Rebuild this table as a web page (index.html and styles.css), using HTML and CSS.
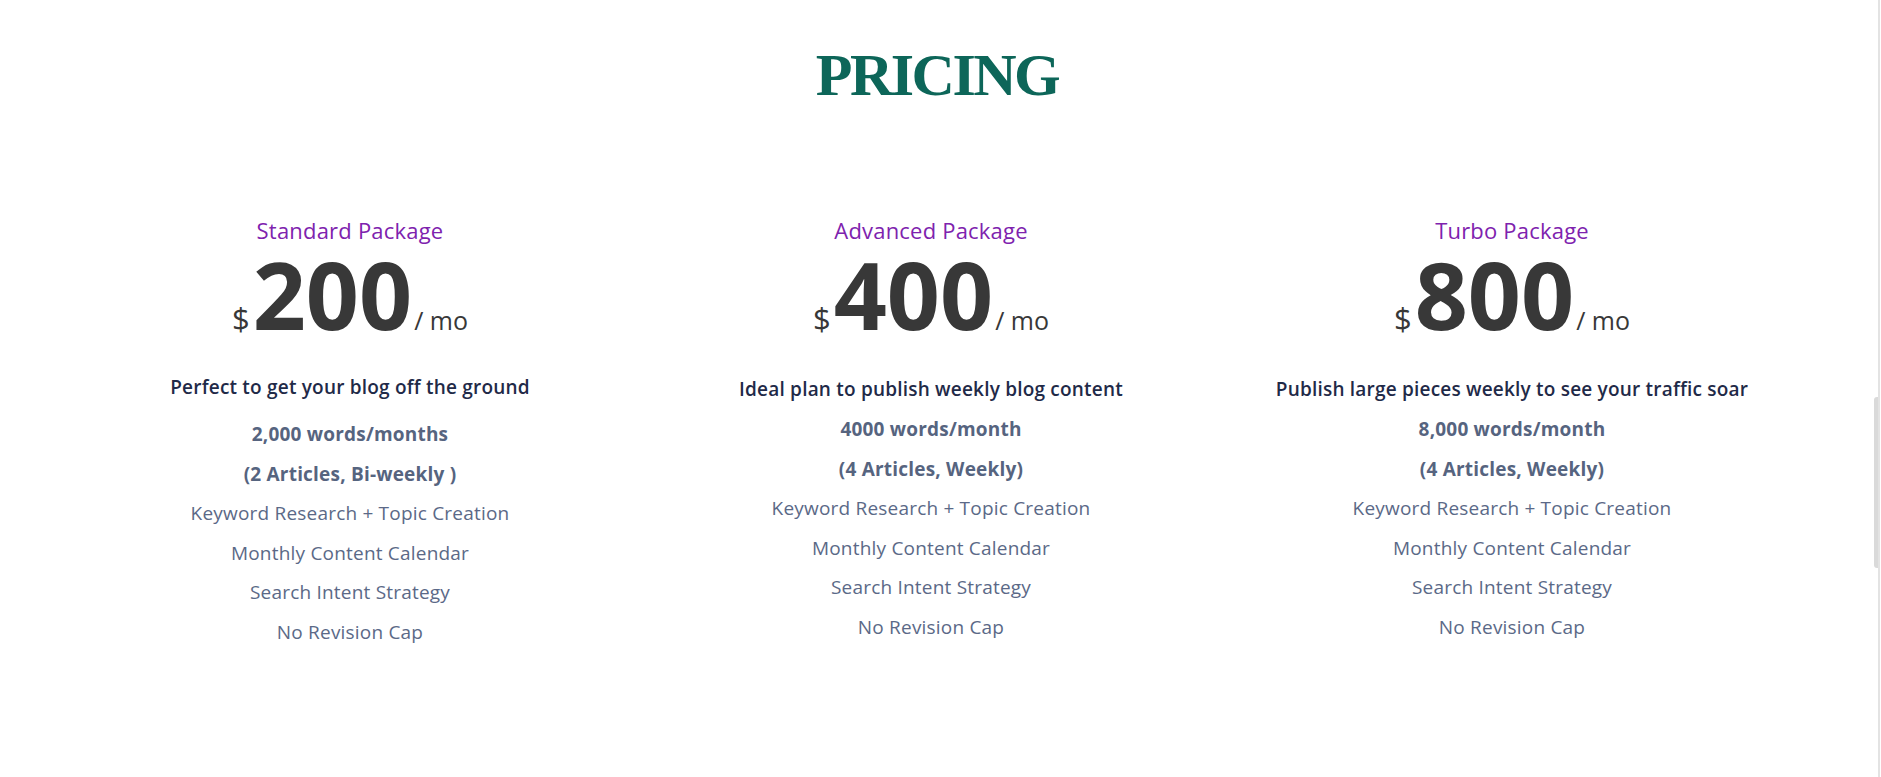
FILE: index.html
```html
<!DOCTYPE html>
<html lang="en">
<head>
    <meta charset="UTF-8">
    <meta name="viewport" content="width=device-width, initial-scale=1.0">
    <title>Pricing</title>
    <link rel="stylesheet" href="styles.css">
</head>
<body>
    <div class="page">
        <h1 class="title">PRICING</h1>

        <div class="plans">
            <!-- Standard -->
            <div class="plan plan-first">
                <h3 class="plan-name">Standard Package</h3>
                <div class="price">
                    <span class="currency">$</span><span class="amount">200</span><span class="period">/ mo</span>
                </div>
                <p class="plan-desc">Perfect to get your blog off the ground</p>
                <ul class="features">
                    <li class="strong">2,000 words/months</li>
                    <li class="strong">(2 Articles, Bi-weekly )</li>
                    <li>Keyword Research + Topic Creation</li>
                    <li>Monthly Content Calendar</li>
                    <li>Search Intent Strategy</li>
                    <li>No Revision Cap</li>
                </ul>
            </div>

            <!-- Advanced -->
            <div class="plan">
                <h3 class="plan-name">Advanced Package</h3>
                <div class="price">
                    <span class="currency">$</span><span class="amount">400</span><span class="period">/ mo</span>
                </div>
                <p class="plan-desc">Ideal plan to publish weekly blog content</p>
                <ul class="features">
                    <li class="strong">4000 words/month</li>
                    <li class="strong">(4 Articles, Weekly)</li>
                    <li>Keyword Research + Topic Creation</li>
                    <li>Monthly Content Calendar</li>
                    <li>Search Intent Strategy</li>
                    <li>No Revision Cap</li>
                </ul>
            </div>

            <!-- Turbo -->
            <div class="plan">
                <h3 class="plan-name">Turbo Package</h3>
                <div class="price">
                    <span class="currency">$</span><span class="amount">800</span><span class="period">/ mo</span>
                </div>
                <p class="plan-desc">Publish large pieces weekly to see your traffic soar</p>
                <ul class="features">
                    <li class="strong">8,000 words/month</li>
                    <li class="strong">(4 Articles, Weekly)</li>
                    <li>Keyword Research + Topic Creation</li>
                    <li>Monthly Content Calendar</li>
                    <li>Search Intent Strategy</li>
                    <li>No Revision Cap</li>
                </ul>
            </div>
        </div>
    </div>

    <div class="scrollbar">
        <div class="scroll-thumb"></div>
    </div>
</body>
</html>
```

FILE: styles.css
```css
body {
    margin: 0;
    padding: 0;
    background-color: #fff;
    font-family: 'Open Sans', sans-serif;
    color: #5b6987;
    overflow: hidden;
}
.page {
    width: 1874px;
    height: 777px;
}
.title {
    margin: 45px 0 0;
    font-family: 'Liberation Serif', serif;
    font-size: 60px;
    line-height: 60px;
    font-weight: 700;
    letter-spacing: -2.5px;
    text-align: center;
    color: #0d6659;
}
.plans {
    display: grid;
    grid-template-columns: repeat(3, 1fr);
    max-width: 1755px;
    margin: 110px auto 0;
    padding-right: 12px;
    box-sizing: border-box;
}
.plan {
    text-align: center;
}
.plan-name {
    margin: 0;
    font-size: 22px;
    line-height: 30px;
    font-weight: 400;
    letter-spacing: 0.2px;
    color: #7e22ae;
}
.price {
    margin-top: 3px;
    line-height: 90px;
    height: 90px;
    color: #383838;
    white-space: nowrap;
}
.currency {
    font-size: 31px;
    line-height: 1;
    margin-right: 3px;
}
.amount {
    font-size: 93px;
    font-weight: 700;
    line-height: 1;
}
.period {
    font-size: 25px;
    line-height: 1;
    margin-left: 2px;
}
.plan-desc {
    margin: 39px 0 16px;
    font-size: 19px;
    line-height: 24px;
    font-weight: 600;
    letter-spacing: 0.2px;
    color: #1f2a48;
}
.plan-first .plan-desc {
    margin: 37px 0 23px;
}
.features {
    list-style: none;
    margin: 0;
    padding: 0;
}
.features li {
    font-size: 19px;
    line-height: 24px;
    letter-spacing: 0.2px;
    margin-bottom: 15.6px;
}
.features li.strong {
    font-weight: 700;
    color: #56647f;
}
.scrollbar {
    position: fixed;
    top: 0;
    right: 1px;
    width: 6px;
    height: 100%;
    border-right: 2px solid #e3e3e3;
    box-sizing: border-box;
}
.scroll-thumb {
    position: absolute;
    top: 397px;
    left: 0;
    width: 4px;
    height: 171px;
    background-color: #dadada;
    border-radius: 3px 0 0 3px;
}
```
